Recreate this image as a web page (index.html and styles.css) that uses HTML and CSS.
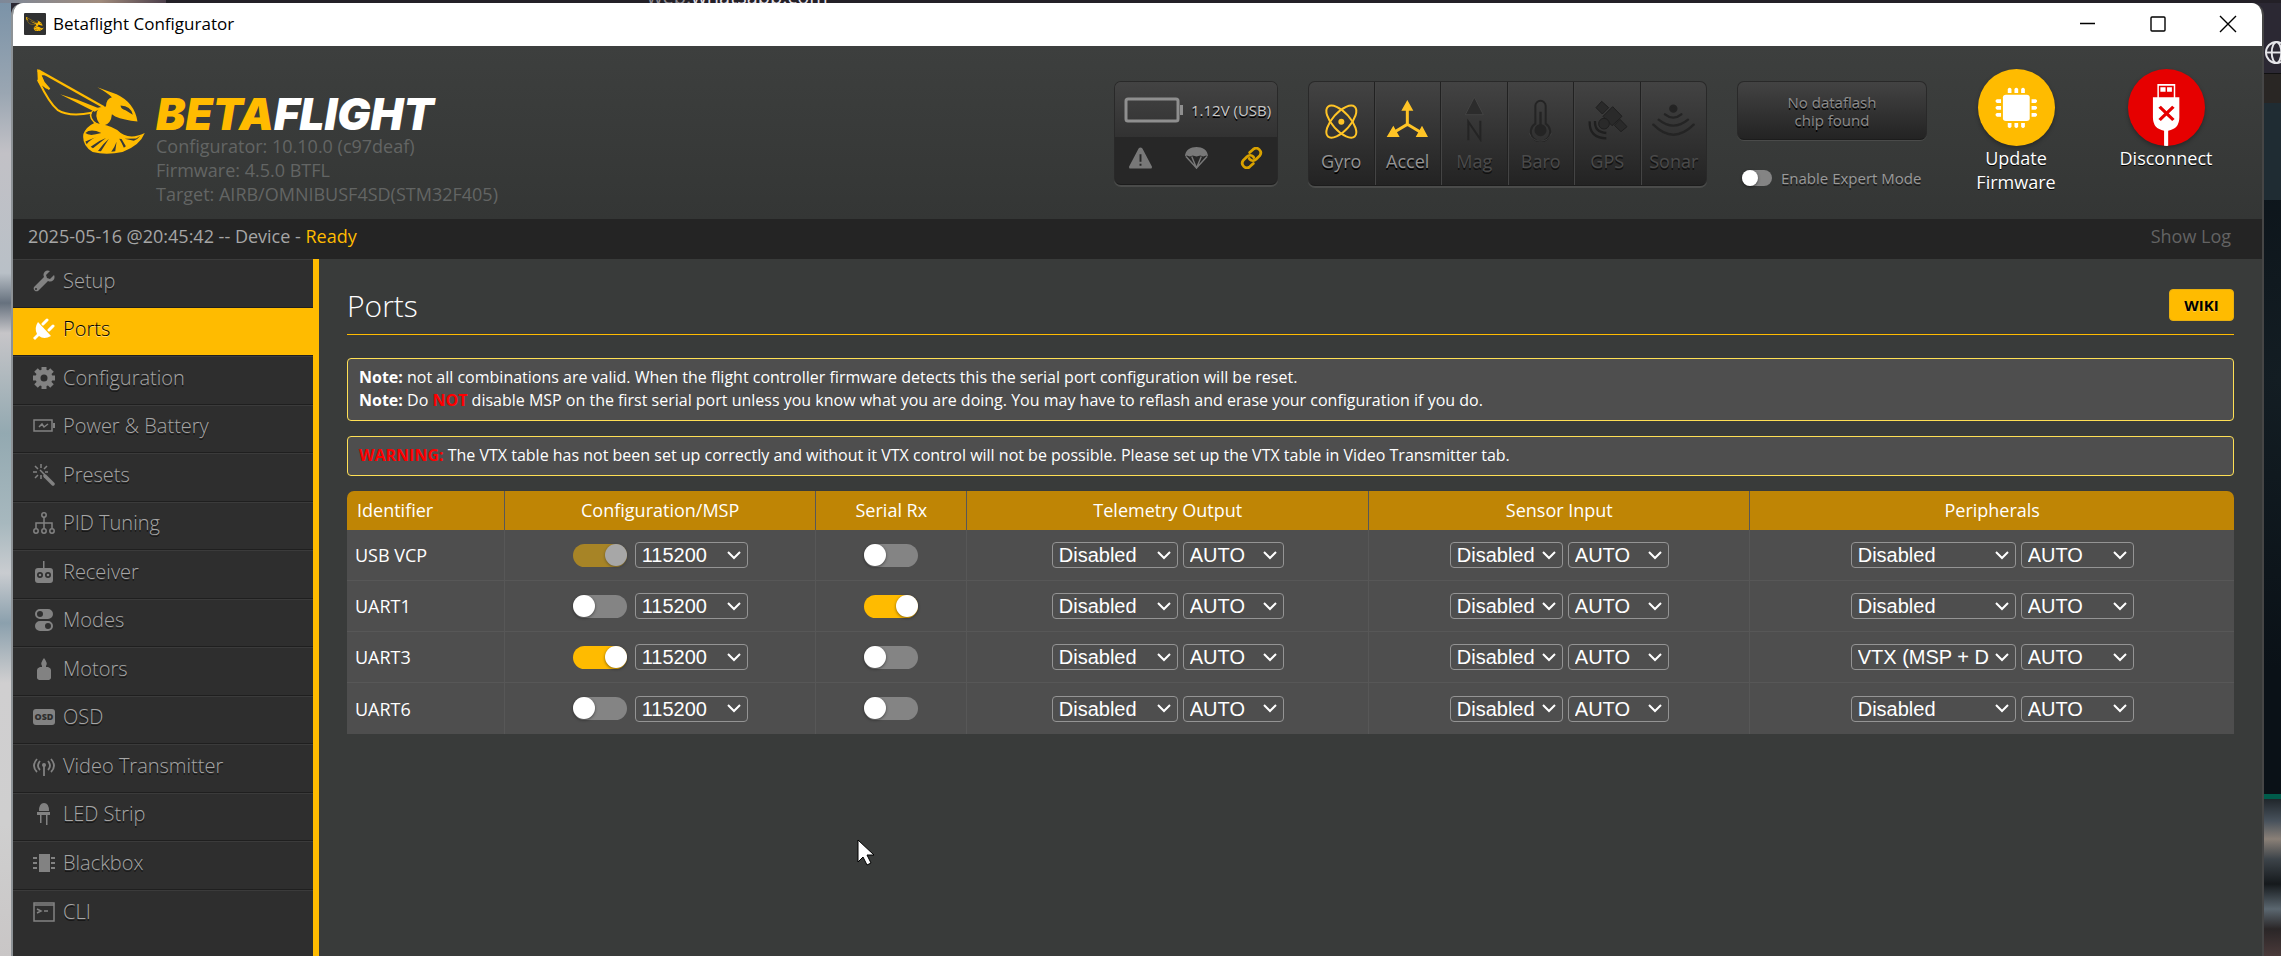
FILE: index.html
```
<!DOCTYPE html>
<html lang="en">
<head>
<meta charset="utf-8">
<title>Betaflight Configurator</title>
<link rel="stylesheet" href="styles.css">
</head>
<body>
<svg class="defs" aria-hidden="true">
  <symbol id="bee" viewBox="111 207 324 256">
    <g fill="none" stroke="currentColor">
      <path stroke-width="7" d="M114 211 312 322"/>
      <path stroke-width="6" d="M114 211 131 248 148 268 117 247Q148 310 172 330 205 352 275 339"/>
    </g>
    <g fill="currentColor">
      <path d="M111 207 142 226 124 226 140 268 113 246Z"/>
      <path d="M180 283 230 299 300 327 284 336Z"/>
      <path fill-rule="evenodd" d="M292 262 350 283Q404 308 413 365 372 361 346 350L336 343Q334 372 310 378 272 374 269 346 273 326 300 322L318 320Q318 298 336 292 320 277 292 262ZM362 317Q363 328 377 331L399 345Q393 318 362 317ZM296 325Q274 331 274 346 275 364 300 374 280 348 296 325Z"/>
      <path fill-rule="evenodd" d="M283 370Q325 374 352 391 384 424 435 400 420 438 368 457 318 468 278 457 245 438 250 403 259 381 283 370ZM256 400Q268 411 304 400 272 385 256 400ZM256 425 296 409Q272 417 260 434ZM279 446 318 415Q295 423 272 441ZM303 455 327 417Q309 432 294 454ZM346 455 350 426Q345 441 334 456ZM378 440 365 418 358 417Q366 430 372 444ZM402 423 374 417 409 416 422 408Q414 418 402 423Z"/>
    </g>
  </symbol>
</svg>

<div class="desktop">
  <div class="behind-top">
    <span class="url">web.<b>whatsapp.com</b></span>
  </div>
  <div class="behind-left"></div>

  <div class="window">
    <div class="titlebar">
      <span class="app-icon"><svg><use href="#bee"/></svg></span>
      <span class="app-title">Betaflight Configurator</span>
      <div class="win-controls">
        <button aria-label="Minimize"><svg viewBox="0 0 16 16"><path d="M0 7.500h15"/></svg></button>
        <button aria-label="Maximize"><svg viewBox="0 0 16 16"><rect x="1" y="1" width="14" height="14" rx="1"/></svg></button>
        <button aria-label="Close"><svg viewBox="0 0 16 16"><path d="M0 0 16 16M16 0 0 16"/></svg></button>
      </div>
    </div>

    <header class="header">
      <svg class="logo-bee"><use href="#bee"/></svg>
      <div class="brand">
        <div class="wordmark">BETA<span>FLIGHT</span></div>
        <div class="version">Configurator: 10.10.0 (c97deaf)</div>
        <div class="version">Firmware: 4.5.0 BTFL</div>
        <div class="version">Target: AIRB/OMNIBUSF4SD(STM32F405)</div>
      </div>

      <div class="panel battery">
        <div class="battery-top">
          <svg class="battery-icon" viewBox="0 0 60 26"><rect x="2" y="2" width="52" height="22" rx="2" fill="none" stroke="#8f8f8f" stroke-width="3"/><path fill="#8f8f8f" d="M56 8h3v10h-3z"/></svg>
          <span>1.12V (USB)</span>
        </div>
        <div class="battery-bottom">
          <svg viewBox="0 0 24 22" class="dim"><path fill="currentColor" fill-rule="evenodd" d="M12 0q1 0 2 1l10 19q0 2-1 2H1q-1 0-1-2L10 1q1-1 2-1zM11 7v8h2V7zM11 17v2h2v-2z"/></svg>
          <svg viewBox="0 0 24 23" class="dim"><path fill="currentColor" d="M0 10C0 3 6 0 12 0s12 3 12 10l-2-1-3 1-3-1-4 1-4-1-3 1-3-1z"/><path fill="none" stroke="currentColor" stroke-width="1.500" d="M1 10 12 22 23 10M7 10l5 12 5-12"/></svg>
          <svg viewBox="0 0 24 24" class="link"><g fill="none" stroke="currentColor" stroke-width="3" stroke-linecap="round"><path d="M10 6l4-3.600a5 5 0 0 1 7 7l-4 4a5 5 0 0 1-7 0l-.5-1"/><path d="M14 18l-4 3.600a5 5 0 0 1-7-7l4-4a5 5 0 0 1 7 0l.5 1"/></g></svg>
        </div>
      </div>

      <ul class="panel sensors">
        <li class="on"><svg viewBox="57 66 135 135" fill="none" stroke="#ffc426" stroke-width="6"><ellipse cx="124" cy="140" rx="60" ry="27" transform="rotate(48 124 140)"/><ellipse cx="124" cy="140" rx="60" ry="27" transform="rotate(-48 124 140)"/><circle cx="124" cy="140" r="9" fill="#ffc426" stroke="none"/></svg>Gyro</li>
        <li class="on"><svg viewBox="248 66 135 135" fill="#ffc426"><path d="M315 75 333 107H297ZM253 186 273 152 292 186ZM377 186 359 152 340 186Z"/><path fill="none" stroke="#ffc426" stroke-width="9" d="M315 100V148L270 175M315 148 360 175"/></svg>Accel</li>
        <li><svg viewBox="453 66 135 135" fill="#2c2c2c" stroke="#4b4b4b" stroke-width="2"><path d="M520 67 547 119H493Z"/><path fill="none" stroke="#242424" stroke-width="6" d="M502 196V140L538 193V137"/></svg>Mag</li>
        <li><svg viewBox="650 66 135 135" fill="none" stroke="#242424" stroke-width="6"><path d="M702 146V93a15 15 0 0 1 31 0V146a29 29 0 1 1-31 0Z"/><path fill="#242424" stroke="none" d="M714 110h7v38a18 18 0 1 1-7 0Z"/><path stroke="#474747" stroke-width="2" d="M684 175a35 35 0 0 0 66 0"/></svg>Baro</li>
        <li><svg viewBox="857 66 135 135" fill="#2a2a2a" stroke="#1f1f1f" stroke-width="3"><path d="M907 79 928 98 909 117 890 98ZM940 95 968 124 938 152 911 124ZM962 133 983 155 965 170 945 151Z"/><circle cx="914" cy="146" r="16"/><path fill="none" stroke-width="7" d="M887 138q-2 34 34 36M871 139q-2 50 50 51"/></svg>GPS</li>
        <li><svg viewBox="1053 66 135 135" fill="#242424" stroke="#242424" stroke-width="7"><circle cx="1120" cy="101" r="9"/><path fill="none" stroke-linecap="round" d="M1095 118q25 20 49 0M1076 134q44 36 88 0M1060 149q60 60 121 0"/></svg>Sonar</li>
      </ul>

      <div class="flash">
        <div class="panel flash-box">No dataflash<br>chip found</div>
        <label class="expert"><input type="checkbox" class="toggle small">Enable Expert Mode</label>
      </div>

      <div class="actions">
        <button class="action">
          <span class="disc amber"><svg viewBox="748 207 207 231" preserveAspectRatio="none" fill="#fff"><rect x="815" y="284" width="72" height="79" rx="8"/><path d="M828 279v-12q5-8 10 0v12zM846 279v-12q5-8 10 0v12zM864 279v-12q5-8 10 0v12zM828 369v11q5 8 10 0v-11zM846 369v11q5 8 10 0v-11zM864 369v11q5 8 10 0v-11zM810 298h-11q-8 5 0 11h11zM810 318h-11q-8 5 0 11h11zM810 339h-11q-8 5 0 11h11zM892 298h11q8 5 0 11h-11zM892 318h11q8 5 0 11h-11zM892 339h11q8 5 0 11h-11z"/></svg></span>
          Update<br>Firmware
        </button>
        <button class="action">
          <span class="disc red"><svg viewBox="1152 207 207 231" preserveAspectRatio="none" fill="#fff"><path fill-rule="evenodd" d="M1231 252h48v40h11v60q0 35-30 40v46h-11v-46q-30-5-30-40v-60h12zM1235 257v35h40v-35z"/><path d="M1239 262h14v13h-14zM1257 262h13v13h-13z"/><path d="M1237 320l37 40M1274 320l-37 40" stroke="#e60000" stroke-width="9"/></svg></span>
          Disconnect
        </button>
      </div>
    </header>

    <div class="logbar">
      <span>2025-05-16 @20:45:42 -- Device - <em>Ready</em></span>
      <button>Show Log</button>
    </div>

    <div class="main">
      <nav class="sidebar">
        <a href="#setup"><svg viewBox="0 0 22 22"><path d="M21 5l-4 4-3-1-1-3 4-4C13-1 9 3 11 7L1 17a3 3 0 0 0 4 4L15 11c4 2 8-2 6-6zM3 20a1 1 0 1 1 0-2 1 1 0 0 1 0 2z"/></svg>Setup</a>
        <a href="#ports" class="active"><svg viewBox="0 0 22 22"><path d="M5 4l13 14q-7 4-12 0l-4 4-2-2 4-4Q1 10 5 4z"/><path fill="none" stroke="currentColor" stroke-width="3" stroke-linecap="round" d="M10 6l4-4M16 12l4-4"/></svg>Ports</a>
        <a href="#configuration"><svg viewBox="0 0 22 22"><circle cx="11" cy="11" r="6" fill="none" stroke="currentColor" stroke-width="5"/><path fill="none" stroke="currentColor" stroke-width="5" d="M11 0v4M11 18v4M0 11h4M18 11h4M3 3l3 3M16 16l3 3M19 3l-3 3M6 16l-3 3"/></svg>Configuration</a>
        <a href="#power"><svg viewBox="0 0 22 22"><g fill="none" stroke="currentColor" stroke-width="1.500"><path d="M1 5h18v11H1zM6 12l3-3 2 3 4-3"/></g><path d="M20 8h2v5h-2z"/></svg>Power &amp; Battery</a>
        <a href="#presets"><svg viewBox="0 0 22 22"><path fill="none" stroke="currentColor" stroke-width="3.500" stroke-linecap="round" d="M12 12l8 8"/><path fill="none" stroke="currentColor" stroke-width="1.500" d="M7 6l5 5M8 0v4M8 11v4M0 8h4M12 8h3M2 2l3 3M14 2l-3 3M2 14l3-3"/></svg>Presets</a>
        <a href="#pid"><svg viewBox="0 0 22 22" stroke="currentColor" stroke-width="1.500"><g fill="none"><circle cx="11" cy="3" r="2.200"/><circle cx="3" cy="19" r="2.200"/><circle cx="11" cy="19" r="2.200"/><circle cx="19" cy="19" r="2.200"/><path d="M11 5v11M3 16v-5h16v5"/></g></svg>PID Tuning</a>
        <a href="#receiver"><svg viewBox="0 0 22 22"><path fill-rule="evenodd" d="M10 0h1.500v7H17q3 0 3 3v9q0 3-3 3H5q-3 0-3-3v-9q0-3 3-3h5zM7 11a3 3 0 1 0 0 6 3 3 0 0 0 0-6zM15 11a3 3 0 1 0 0 6 3 3 0 0 0 0-6z"/><circle cx="7" cy="14" r="1.300"/><circle cx="15" cy="14" r="1.300"/></svg>Receiver</a>
        <a href="#modes"><svg viewBox="0 0 22 22"><path fill-rule="evenodd" d="M7 0h8a5 5 0 0 1 0 10H7A5 5 0 0 1 7 0zM7 2a3 3 0 1 0 0 6 3 3 0 0 0 0-6zM7 12h8a5 5 0 0 1 0 10H7a5 5 0 0 1 0-10zM15 14a3 3 0 1 0 0 6 3 3 0 0 0 0-6z"/></svg>Modes</a>
        <a href="#motors"><svg viewBox="0 0 22 22"><path d="M11 0q4 5 2 8v1h2q3 1 3 3v8q0 1-2 2H6q-2-1-2-2v-8q0-2 3-3h2V8Q7 5 11 0z"/></svg>Motors</a>
        <a href="#osd"><svg viewBox="0 0 22 22"><rect y="3" width="22" height="16" rx="3"/><text x="11" y="14" text-anchor="middle" class="osd-text">OSD</text></svg>OSD</a>
        <a href="#vtx"><svg viewBox="0 0 22 22"><path fill="none" stroke="currentColor" stroke-width="1.800" d="M4 4q-6 7 0 13M7 6q-4 5 0 9M18 4q6 7 0 13M15 6q4 5 0 9M11 10v11"/><circle cx="11" cy="10" r="2"/></svg>Video Transmitter</a>
        <a href="#led"><svg viewBox="0 0 22 22"><path d="M6 8q0-8 5-8t5 8zM4 9h13v3H4zM7 12h1.500v8H7zM13 12h1.500v10H13z"/></svg>LED Strip</a>
        <a href="#blackbox"><svg viewBox="0 0 22 22"><path d="M6 2h11v18H6zM0 5h4v2H0zM0 10h4v2H0zM0 15h4v2H0zM18 5h4v2h-4zM18 10h4v2h-4zM18 15h4v2h-4z"/></svg>Blackbox</a>
        <a href="#cli"><svg viewBox="0 0 22 22"><path fill="none" stroke="currentColor" stroke-width="1.500" d="M1 2h20v18H1zM1 4h20M4 8l4 2-4 2M11 10h4"/></svg>CLI</a>
      </nav>

      <main class="content">
        <div class="page-head">
          <h1>Ports</h1>
          <button class="wiki">WIKI</button>
        </div>
        <div class="note">
          <p><strong>Note:</strong> not all combinations are valid. When the flight controller firmware detects this the serial port configuration will be reset.</p>
          <p><strong>Note:</strong> Do <strong class="alert">NOT</strong> disable MSP on the first serial port unless you know what you are doing. You may have to reflash and erase your configuration if you do.</p>
        </div>
        <div class="note">
          <p><strong class="alert">WARNING:</strong> The VTX table has not been set up correctly and without it VTX control will not be possible. Please set up the VTX table in Video Transmitter tab.</p>
        </div>

        <table class="ports">
          <colgroup><col class="c-id"><col class="c-msp"><col class="c-rx"><col class="c-tel"><col class="c-sen"><col></colgroup>
          <thead>
            <tr><th>Identifier</th><th>Configuration/MSP</th><th>Serial Rx</th><th>Telemetry Output</th><th>Sensor Input</th><th>Peripherals</th></tr>
          </thead>
          <tbody>
            <tr>
              <td>USB VCP</td>
              <td><div class="cell"><input type="checkbox" class="toggle" aria-label="USB VCP MSP" checked disabled><select class="w-m" aria-label="MSP speed"><option>115200</option></select></div></td>
              <td><div class="cell"><input type="checkbox" class="toggle" aria-label="USB VCP Serial Rx"></div></td>
              <td><div class="cell"><select class="w-l" aria-label="Telemetry"><option>Disabled</option></select><select class="w-s" aria-label="Telemetry speed"><option>AUTO</option></select></div></td>
              <td><div class="cell"><select class="w-m" aria-label="Sensor"><option>Disabled</option></select><select class="w-s" aria-label="Sensor speed"><option>AUTO</option></select></div></td>
              <td><div class="cell"><select class="w-xl" aria-label="Peripheral"><option>Disabled</option></select><select class="w-m" aria-label="Peripheral speed"><option>AUTO</option></select></div></td>
            </tr>
            <tr>
              <td>UART1</td>
              <td><div class="cell"><input type="checkbox" class="toggle" aria-label="UART1 MSP"><select class="w-m" aria-label="MSP speed"><option>115200</option></select></div></td>
              <td><div class="cell"><input type="checkbox" class="toggle" aria-label="UART1 Serial Rx" checked></div></td>
              <td><div class="cell"><select class="w-l" aria-label="Telemetry"><option>Disabled</option></select><select class="w-s" aria-label="Telemetry speed"><option>AUTO</option></select></div></td>
              <td><div class="cell"><select class="w-m" aria-label="Sensor"><option>Disabled</option></select><select class="w-s" aria-label="Sensor speed"><option>AUTO</option></select></div></td>
              <td><div class="cell"><select class="w-xl" aria-label="Peripheral"><option>Disabled</option></select><select class="w-m" aria-label="Peripheral speed"><option>AUTO</option></select></div></td>
            </tr>
            <tr>
              <td>UART3</td>
              <td><div class="cell"><input type="checkbox" class="toggle" aria-label="UART3 MSP" checked><select class="w-m" aria-label="MSP speed"><option>115200</option></select></div></td>
              <td><div class="cell"><input type="checkbox" class="toggle" aria-label="UART3 Serial Rx"></div></td>
              <td><div class="cell"><select class="w-l" aria-label="Telemetry"><option>Disabled</option></select><select class="w-s" aria-label="Telemetry speed"><option>AUTO</option></select></div></td>
              <td><div class="cell"><select class="w-m" aria-label="Sensor"><option>Disabled</option></select><select class="w-s" aria-label="Sensor speed"><option>AUTO</option></select></div></td>
              <td><div class="cell"><select class="w-xl" aria-label="Peripheral"><option>VTX (MSP + Displayport)</option></select><select class="w-m" aria-label="Peripheral speed"><option>AUTO</option></select></div></td>
            </tr>
            <tr>
              <td>UART6</td>
              <td><div class="cell"><input type="checkbox" class="toggle" aria-label="UART6 MSP"><select class="w-m" aria-label="MSP speed"><option>115200</option></select></div></td>
              <td><div class="cell"><input type="checkbox" class="toggle" aria-label="UART6 Serial Rx"></div></td>
              <td><div class="cell"><select class="w-l" aria-label="Telemetry"><option>Disabled</option></select><select class="w-s" aria-label="Telemetry speed"><option>AUTO</option></select></div></td>
              <td><div class="cell"><select class="w-m" aria-label="Sensor"><option>Disabled</option></select><select class="w-s" aria-label="Sensor speed"><option>AUTO</option></select></div></td>
              <td><div class="cell"><select class="w-xl" aria-label="Peripheral"><option>Disabled</option></select><select class="w-m" aria-label="Peripheral speed"><option>AUTO</option></select></div></td>
            </tr>
          </tbody>
        </table>
      </main>
    </div>
  </div>

  <div class="behind-right">
    <div class="b-toolbar"><svg viewBox="0 0 24 24" fill="none" stroke="#e6e6ea" stroke-width="2"><circle cx="12" cy="12" r="11"/><ellipse cx="12" cy="12" rx="5" ry="11"/><path d="M1 12h22"/></svg></div>
    <div class="b-bookmarks"></div>
    <div class="b-chat-head"></div>
    <div class="b-chat"></div>
    <div class="b-photo"></div>
  </div>
</div>

<svg class="cursor" viewBox="0 0 18 27" aria-hidden="true"><path d="M1 1v22l5-5 4 8 4-2-4-8h7z" fill="#fff" stroke="#000" stroke-width="1"/></svg>
</body>
</html>
```
FILE: styles.css
```
* { box-sizing: border-box; }
body {
  margin: 0;
  background: #2b2833;
  font: 18px/24px "Open Sans", "Noto Sans", sans-serif;
  color: #fff;
  overflow: hidden;
}
button { border: 0; padding: 0; background: none; font: inherit; color: inherit; }
.defs { display: none; }

.desktop {
  display: grid;
  grid-template-columns: 11px minmax(0, 1fr) 17px;
  grid-template-rows: 3px minmax(0, 1fr);
  height: 100vh;
}
.behind-top {
  grid-column: 1 / -1;
  display: flex;
  align-items: flex-end;
  overflow: hidden;
  padding-left: 647px;
  background: linear-gradient(90deg, #7d8899 0, #a08b7c 100px, #4c3f4b 166px, #232027 166px);
}
.url { font-size: 20px; line-height: 12px; color: #8d8b92; }
.url b { font-weight: 400; color: #e0dfe4; }
.behind-left {
  background: linear-gradient(180deg, #7b93a8 0, #9aa6b2 90px, #c2c1c6 150px, #b9c0c7 270px, #66717e 300px, #c6c5c8 330px, #93a9b1 430px, #a7b8be 520px, #c9ccd0 570px, #8ba0ad 620px, #d0cfd0 680px, #cfcfcf 820px, #c9c6c6 100%);
}
.behind-right { display: flex; flex-direction: column; background: #0b141a; overflow: hidden; }
.b-toolbar { height: 71px; padding: 38px 0 0 1px; background: #2b2833; border-bottom: 1px solid #111; }
.b-toolbar svg { display: block; width: 23px; height: 23px; }
.b-bookmarks { height: 29px; background: #292624; }
.b-chat-head { height: 97px; background: #1f2c33; }
.b-chat { flex: 1; background: radial-gradient(circle at 80% 30%, #131d23, #0a1117 70%); }
.b-photo { height: 162px; border-top: 5px solid #005c4b; background: linear-gradient(180deg, #20262b 0, #48525c 22px, #8a8077 40px, #3d444a 60px, #15191c 85px, #5b6770 110px, #2a2627 130px, #4a3a3a 100%); }

.window {
  display: flex;
  flex-direction: column;
  min-width: 0;
  border: solid #464646;
  border-width: 0 2px;
  border-left-color: #8d9296;
  border-radius: 12px 12px 0 0;
  overflow: hidden;
  background: #393b3a;
}
.titlebar { display: flex; align-items: center; flex: none; height: 43px; padding: 0 26px 2px 11px; background: #fff; color: #000; }
.app-icon { display: flex; align-items: center; justify-content: center; width: 22px; height: 22px; margin-right: 7px; background: #303132; border-radius: 1px; color: #ffbb00; }
.app-icon svg { width: 18px; height: 14px; }
.app-title { flex: 1; font-size: 17px; }
.win-controls { display: flex; gap: 54px; }
.win-controls button { display: flex; }
.win-controls svg { width: 16px; height: 16px; fill: none; stroke: #000; stroke-width: 1.400; overflow: visible; }

.header {
  display: flex;
  align-items: flex-start;
  flex: none;
  height: 173px;
  padding: 23px 41px 0 24px;
  background: linear-gradient(180deg, #3d3f3e, #343635);
}
.logo-bee { flex: none; width: 108px; height: 85px; color: #ffbb00; }
.brand { flex: 1; padding: 25px 0 0 11px; white-space: nowrap; }
.wordmark { font: italic 900 44px/40px Inter, "Liberation Sans", sans-serif; color: #ffbb00; }
.wordmark span { color: #fff; }
.version { color: #636564; }

.panel {
  flex: none;
  border: 1px solid #292929;
  border-bottom-color: #1c1c1c;
  border-radius: 7px;
  background: linear-gradient(180deg, #434343, #232323);
  box-shadow: 0 2px 0 #4a4b4a;
  overflow: hidden;
}
.battery { width: 164px; height: 104px; margin: 12px 30px 0 0; text-shadow: 0 2px #000; }
.battery-top { display: flex; align-items: center; gap: 7px; height: 55px; padding-left: 9px; background: linear-gradient(180deg, #434343, #323232); color: #c8c8c8; font-size: 15px; white-space: nowrap; }
.battery-icon { flex: none; width: 60px; height: 26px; }
.battery-bottom { display: flex; justify-content: space-between; height: 49px; padding: 10px 14px; background: #272727; }
.battery-bottom svg { width: 23px; height: 22px; }
.dim { color: #787878; }
.link { color: #d9a200; }

.sensors { display: flex; width: 399px; height: 105px; margin: 12px 30px 0 0; padding: 0; list-style: none; }
.sensors li { flex: 1; display: flex; flex-direction: column; align-items: center; padding-top: 15px; gap: 7px; border-left: 1px solid #444; border-right: 1px solid #212121; color: #4b4b4b; text-shadow: 0 2px #111; }
.sensors li:first-child { border-left: 0; }
.sensors li:last-child { border-right: 0; }
.sensors .on { color: #949494; text-shadow: 0 2px #000; }
.sensors svg { width: 45px; height: 45px; }

.flash { width: 190px; margin: 12px 34px 0 0; font-size: 15px; }
.flash-box { height: 59px; padding-top: 11px; line-height: 18px; text-align: center; color: #8c8c8c; text-shadow: 0 2px #000; box-shadow: 0 1px 0 #4a4b4a; }
.expert { display: flex; align-items: center; gap: 9px; margin-top: 26px; padding-left: 5px; color: #9a9a9a; text-shadow: 0 2px #1c1c1c; white-space: nowrap; }

.actions { display: flex; gap: 40px; }
.action { display: flex; flex-direction: column; align-items: center; width: 110px; color: #fff; text-shadow: 0 1px #000; }
.disc { display: block; width: 77px; height: 77px; border-radius: 50%; overflow: hidden; box-shadow: 0 2px 4px rgba(0, 0, 0, .3); }
.disc svg { display: block; width: 77px; height: 77px; }
.amber { background: #ffbb00; }
.red { background: #e60000; }

.logbar { display: flex; align-items: center; justify-content: space-between; flex: none; height: 40px; padding: 0 31px 6px 15px; background: #242424; color: #a6a6a6; }
.logbar em { font-style: normal; color: #ffbb00; }
.logbar button { color: #636363; }

.main { display: flex; flex: 1; min-height: 0; }
.sidebar {
  display: grid;
  grid-auto-rows: 1fr;
  flex: none;
  width: 306px;
  padding-bottom: 18px;
  border-right: 6px solid #ffbb00;
  background: #2e2e2e;
}
.sidebar a { display: flex; align-items: center; gap: 8px; padding: 0 0 5px 20px; border-top: 1px solid #3b3b3b; border-bottom: 1px solid #1f1f1f; color: #a6a6a6; font-size: 20px; font-weight: 300; text-decoration: none; text-shadow: 0 2px rgba(0, 0, 0, .5); }
.sidebar a:last-child { border-bottom: 0; }
.sidebar svg { width: 22px; height: 22px; color: #828282; fill: currentColor; }
.sidebar .active { background: #ffbb00; border-top-color: #ffbb00; color: #000; text-shadow: 0 1px rgba(255, 255, 255, .5); }
.sidebar .active svg { color: #fff; }
.osd-text { font: 800 9px "Open Sans", sans-serif; fill: #2e2e2e; text-shadow: none; }

.content { flex: 1; min-width: 0; padding: 29px 28px 0; background: #393b3a; }
.page-head { display: flex; align-items: flex-start; justify-content: space-between; height: 47px; margin-bottom: 23px; border-bottom: 1px solid #ffbb00; }
h1 { margin: 0; font-size: 30px; line-height: 36px; font-weight: 300; }
.wiki { width: 65px; height: 32px; margin-top: 1px; border: 1px solid #e8b010; border-radius: 4px; background: #ffbb00; color: #000; font-size: 15px; font-weight: 700; line-height: 28px; text-shadow: 0 1px rgba(255, 255, 255, .3); }

.note { margin-bottom: 15px; padding: 7px 11px 8px; border: 1px solid #ffe055; border-radius: 4px; background: #4e4e4e; font-size: 16px; line-height: 23px; }
.note p { margin: 0; }
.alert { color: #f00; }

.ports { width: 100%; border-collapse: separate; border-spacing: 0; table-layout: fixed; }
.c-id { width: 158px; }
.c-msp { width: 16.500%; }
.c-rx { width: 8%; }
.c-tel { width: 21.300%; }
.c-sen { width: 20.200%; }
.ports th { height: 39px; padding: 0 0 2px; background: #bf8505; border-right: 1px solid #575757; font-weight: 400; }
.ports th:first-child { padding-left: 10px; text-align: left; border-top-left-radius: 7px; }
.ports th:last-child { border-right: 0; border-top-right-radius: 7px; }
.ports td { height: 51px; padding: 0; background: #4e4e4e; border-right: 1px solid #575757; border-bottom: 1px solid #575757; }
.ports td:first-child { padding-left: 8px; }
.ports td:last-child { border-right: 0; }
.ports tr:last-child td { border-bottom: 0; }
.cell { display: flex; align-items: center; justify-content: center; gap: 5px; }

select {
  appearance: none;
  height: 26px;
  padding: 0 26px 0 6px;
  border: 1px solid #949494;
  border-radius: 4px;
  background: url("data:image/svg+xml,%3Csvg xmlns='http://www.w3.org/2000/svg' viewBox='0 0 14 9'%3E%3Cpath d='M1 1l6 6 6-6' fill='none' stroke='white' stroke-width='2'/%3E%3C/svg%3E") no-repeat right 6px center / 14px 9px;
  color: #fff;
  font: 20px/24px "Liberation Sans", Arial, sans-serif;
}
.toggle + select { margin-left: 3px; }
.w-s { width: 101px; }
.w-m { width: 113px; }
.w-l { width: 126px; }
.w-xl { width: 165px; }

.toggle { appearance: none; position: relative; flex: none; width: 54px; height: 23px; margin: 0; border-radius: 12px; background: #848484; }
.toggle::before { content: ""; display: block; width: 22px; height: 22px; border-radius: 50%; background: #fff; box-shadow: 0 1px 3px rgba(0, 0, 0, .5); }
.toggle:checked { background: #ffbb00; }
.toggle:checked::before { margin-left: auto; }
.toggle:disabled { opacity: .5; }
.toggle.small { width: 30px; height: 16px; }
.toggle.small::before { width: 16px; height: 16px; }

.cursor { position: absolute; left: 857px; top: 839px; width: 18px; height: 27px; }
```
